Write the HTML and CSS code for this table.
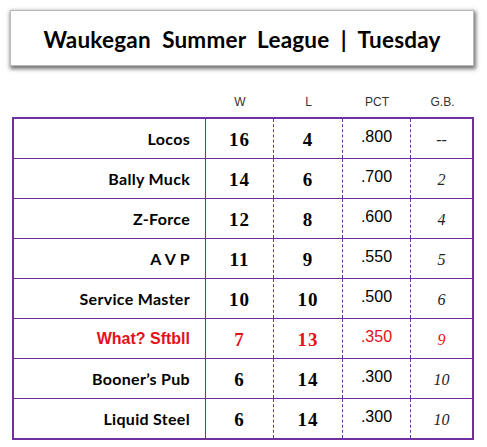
FILE: index.html
```html
<!DOCTYPE html>
<html lang="en">
<head>
<meta charset="utf-8">
<title>Waukegan Summer League | Tuesday</title>
<link rel="stylesheet" href="styles.css">
</head>
<body>
<div class="page">
  <header class="banner">
    <h1 class="banner-title">Waukegan&nbsp; Summer&nbsp; League&nbsp; |&nbsp; Tuesday</h1>
  </header>

  <div class="col-heads">
    <span></span>
    <span>W</span>
    <span>L</span>
    <span>PCT</span>
    <span>G.B.</span>
  </div>

  <div class="standings">
    <div class="row">
      <div class="team">Locos</div><div class="num">16</div><div class="num">4</div><div class="pct">.800</div><div class="gb">--</div>
    </div>
    <div class="row">
      <div class="team">Bally Muck</div><div class="num">14</div><div class="num">6</div><div class="pct">.700</div><div class="gb"><i>2</i></div>
    </div>
    <div class="row">
      <div class="team">Z-Force</div><div class="num">12</div><div class="num">8</div><div class="pct">.600</div><div class="gb"><i>4</i></div>
    </div>
    <div class="row">
      <div class="team">A V P</div><div class="num">11</div><div class="num">9</div><div class="pct">.550</div><div class="gb"><i>5</i></div>
    </div>
    <div class="row">
      <div class="team">Service Master</div><div class="num">10</div><div class="num">10</div><div class="pct">.500</div><div class="gb"><i>6</i></div>
    </div>
    <div class="row row-alert">
      <div class="team team-alt">What? Sftbll</div><div class="num">7</div><div class="num">13</div><div class="pct">.350</div><div class="gb"><i>9</i></div>
    </div>
    <div class="row">
      <div class="team">Booner’s Pub</div><div class="num">6</div><div class="num">14</div><div class="pct">.300</div><div class="gb"><i>10</i></div>
    </div>
    <div class="row">
      <div class="team">Liquid Steel</div><div class="num">6</div><div class="num">14</div><div class="pct">.300</div><div class="gb"><i>10</i></div>
    </div>
  </div>
</div>
</body>
</html>
```

FILE: styles.css
```css
* { box-sizing: border-box; }

html, body {
  margin: 0;
  padding: 0;
  background: #ffffff;
}

.page {
  width: 487px;
  height: 447px;
  padding: 10px 0 0 0;
  color: #000;
}

.banner {
  margin-left: 10px;
  width: 464px;
  height: 56px;
  border: 1px solid #b8b8b8;
  background: #fff;
  box-shadow: 1px 2px 4px 1px rgba(0, 0, 0, 0.55);
  display: flex;
  align-items: center;
  justify-content: center;
}

.banner-title {
  margin: 0;
  font-family: Lato, "Open Sans", sans-serif;
  font-weight: 700;
  font-size: 22.5px;
  letter-spacing: 0.2px;
  color: #000;
  padding-top: 2px;
}

.col-heads {
  display: grid;
  grid-template-columns: 194px 68px 69px 68px 63px;
  margin: 26px 0 0 12px;
  width: 462px;
  height: 20px;
  font-family: "Liberation Sans", Arial, sans-serif;
  font-size: 12px;
  line-height: 20px;
  color: #333;
  text-align: center;
}

.standings {
  margin: 5px 0 0 12px;
  width: 462px;
  border: 2px solid #7030a0;
}

.row {
  display: grid;
  grid-template-columns: 192px 68px 69px 68px 61px;
  height: 40px;
  border-bottom: 1px solid #7030a0;
}

.row:last-child {
  height: 39px;
  border-bottom: none;
}

.row > div {
  display: flex;
  align-items: center;
  justify-content: center;
  border-right: 1px dashed #7030a0;
}

.row > div:last-child { border-right: none; }

.row > .team {
  justify-content: flex-end;
  padding-right: 15px;
  border-right: 1px solid #7030a0;
  font-family: Lato, "Open Sans", sans-serif;
  font-weight: 700;
  font-size: 16px;
  letter-spacing: 0.3px;
}

.row > .team-alt {
  font-family: "Liberation Sans", Arial, sans-serif;
  font-size: 16px;
  letter-spacing: 0;
}

.num {
  font-family: "Liberation Serif", "Times New Roman", serif;
  font-weight: 700;
  font-size: 19px;
  letter-spacing: 1px;
  padding-top: 2px;
}

.pct {
  font-family: "Liberation Sans", Arial, sans-serif;
  font-size: 16px;
  padding-bottom: 3px;
}

.gb {
  font-family: "Liberation Serif", "Times New Roman", serif;
  font-size: 16px;
  color: #222;
  padding-top: 3px;
}

.row-alert > div,
.row-alert .gb {
  color: #e3101a;
}
```
